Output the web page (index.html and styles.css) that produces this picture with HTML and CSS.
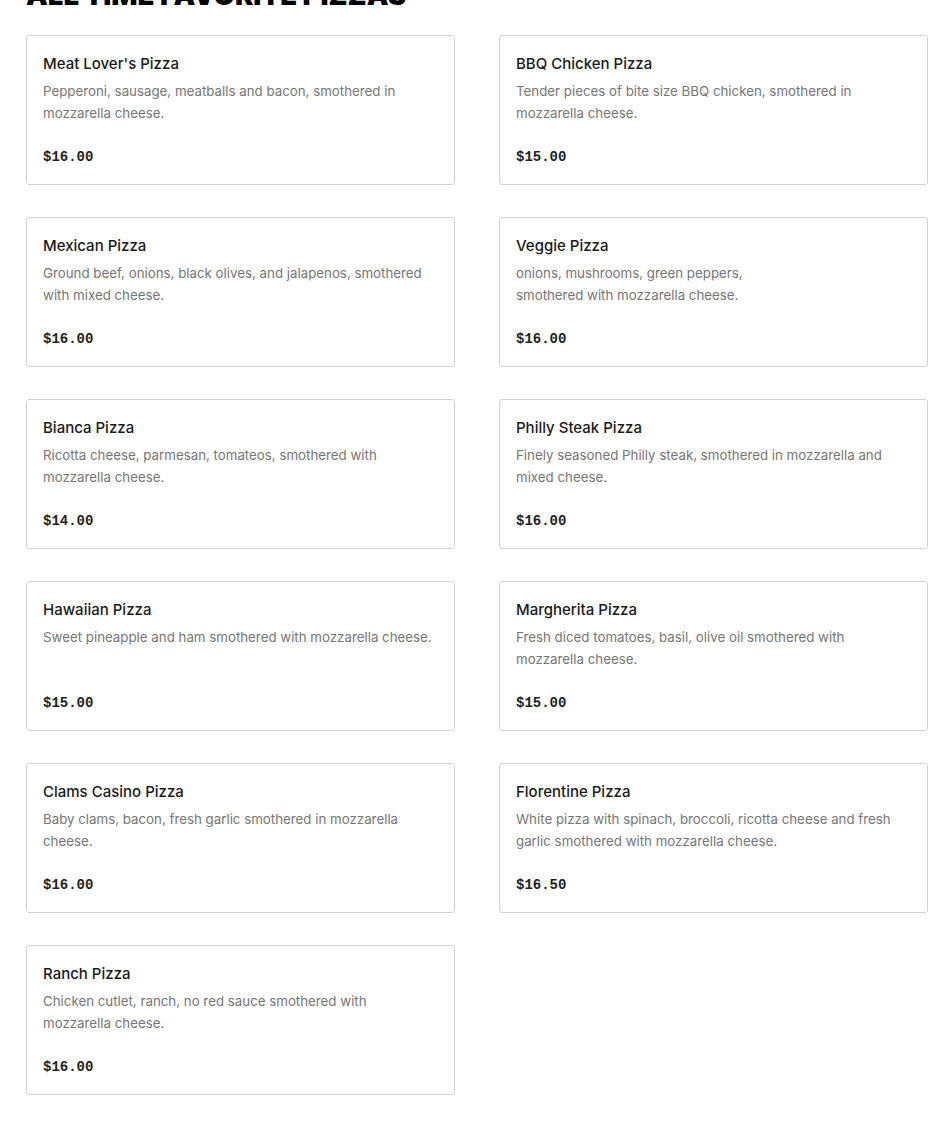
FILE: index.html
```html
<!DOCTYPE html>
<html>
<head>
<title>All Time Favorite Pizzas</title>
<link rel="stylesheet" href="styles.css">
</head>
<body>
  <div class='menu'>
    <h2 class='menutitle'>ALL TIME FAVORITE PIZZAS</h2>
    <div class='items'>
      <div class='item'>
        <p class='name'>Meat Lover's Pizza</p>
        <p class='desc'>Pepperoni, sausage, meatballs and bacon, smothered in mozzarella cheese.</p>
        <p class='price'>$16.00</p>
      </div>
      <div class='item'>
        <p class='name'>BBQ Chicken Pizza</p>
        <p class='desc'>Tender pieces of bite size BBQ chicken, smothered in mozzarella cheese.</p>
        <p class='price'>$15.00</p>
      </div>
      <div class='item'>
        <p class='name'>Mexican Pizza</p>
        <p class='desc'>Ground beef, onions, black olives, and jalapenos, smothered with mixed cheese.</p>
        <p class='price'>$16.00</p>
      </div>
      <div class='item'>
        <p class='name'>Veggie Pizza</p>
        <p class='desc'>onions, mushrooms, green peppers,<br>smothered with mozzarella cheese.</p>
        <p class='price'>$16.00</p>
      </div>
      <div class='item'>
        <p class='name'>Bianca Pizza</p>
        <p class='desc'>Ricotta cheese, parmesan, tomateos, smothered with mozzarella cheese.</p>
        <p class='price'>$14.00</p>
      </div>
      <div class='item'>
        <p class='name'>Philly Steak Pizza</p>
        <p class='desc'>Finely seasoned Philly steak, smothered in mozzarella and mixed cheese.</p>
        <p class='price'>$16.00</p>
      </div>
      <div class='item'>
        <p class='name'>Hawaiian Pizza</p>
        <p class='desc'>Sweet pineapple and ham smothered with mozzarella cheese.</p>
        <p class='price'>$15.00</p>
      </div>
      <div class='item'>
        <p class='name'>Margherita Pizza</p>
        <p class='desc'>Fresh diced tomatoes, basil, olive oil smothered with mozzarella cheese.</p>
        <p class='price'>$15.00</p>
      </div>
      <div class='item'>
        <p class='name'>Clams Casino Pizza</p>
        <p class='desc'>Baby clams, bacon, fresh garlic smothered in mozzarella cheese.</p>
        <p class='price'>$16.00</p>
      </div>
      <div class='item'>
        <p class='name'>Florentine Pizza</p>
        <p class='desc'>White pizza with spinach, broccoli, ricotta cheese and fresh garlic smothered with mozzarella cheese.</p>
        <p class='price'>$16.50</p>
      </div>
      <div class='item'>
        <p class='name'>Ranch Pizza</p>
        <p class='desc'>Chicken cutlet, ranch, no red sauce smothered with mozzarella cheese.</p>
        <p class='price'>$16.00</p>
      </div>
    </div>
  </div>
</body>
</html>
```

FILE: styles.css
```css
body{
  margin: 0;
  background-color: #ffffff;
  font-family: 'Inter', 'Liberation Sans', sans-serif;
  color: #1f1f1f;
}

.menu{
  padding: 0 22px 30px 26px;
}

.menutitle{
  margin: -22px 0 0 0;
  font-family: 'Inter', sans-serif;
  font-weight: 900;
  font-size: 27.5px;
  line-height: 34px;
  color: #000000;
}

.items{
  display: grid;
  grid-template-columns: 429px 429px;
  column-gap: 44px;
  row-gap: 32px;
  margin-top: 23px;
}

.item{
  border: 1px solid #d3d3d3;
  border-radius: 3px;
  padding: 15px 16px 16px 16px;
}

.item p{
  margin: 0;
}

.name{
  font-size: 15px;
  font-weight: 500;
  line-height: 26px;
  color: #1a1a1a;
}

.desc{
  margin-top: 3px !important;
  font-size: 13.3px;
  line-height: 22px;
  color: #767676;
  min-height: 44px;
}

.price{
  margin-top: 22px !important;
  font-family: 'Liberation Mono', monospace;
  font-weight: bold;
  font-size: 14px;
  line-height: 22px;
  color: #1f1f1f;
}
```
